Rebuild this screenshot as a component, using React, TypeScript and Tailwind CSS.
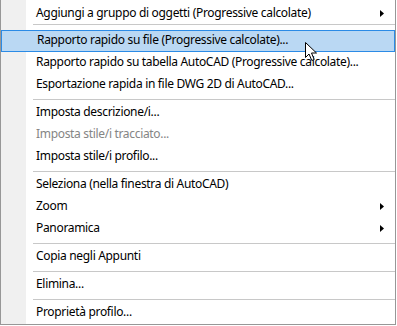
import React from "react";

type Entry =
  | { kind: "item"; label: string; disabled?: boolean; submenu?: boolean; active?: boolean; first?: boolean }
  | { kind: "sep" };

const entries: Entry[] = [
  { kind: "item", label: "Aggiungi a gruppo di oggetti (Progressive calcolate)", submenu: true, first: true },
  { kind: "sep" },
  { kind: "item", label: "Rapporto rapido su file (Progressive calcolate)...", active: true },
  { kind: "item", label: "Rapporto rapido su tabella AutoCAD (Progressive calcolate)..." },
  { kind: "item", label: "Esportazione rapida in file DWG 2D di AutoCAD..." },
  { kind: "sep" },
  { kind: "item", label: "Imposta descrizione/i..." },
  { kind: "item", label: "Imposta stile/i tracciato...", disabled: true },
  { kind: "item", label: "Imposta stile/i profilo..." },
  { kind: "sep" },
  { kind: "item", label: "Seleziona (nella finestra di AutoCAD)" },
  { kind: "item", label: "Zoom", submenu: true },
  { kind: "item", label: "Panoramica", submenu: true },
  { kind: "sep" },
  { kind: "item", label: "Copia negli Appunti" },
  { kind: "sep" },
  { kind: "item", label: "Elimina..." },
  { kind: "sep" },
  { kind: "item", label: "Proprietà profilo..." },
];

function SubArrow() {
  return (
    <svg width="4" height="7" viewBox="0 0 4 7" className="shrink-0">
      <polygon points="0,0 4,3.5 0,7" fill="#000" />
    </svg>
  );
}

function Cursor() {
  return (
    <svg
      width="14"
      height="21"
      viewBox="0 0 14 21"
      className="pointer-events-none absolute left-[304px] top-[41px]"
    >
      <path
        d="M1.5 1.5 V16.5 L5 13 L7.8 19.5 L10.2 18.5 L7.5 12 H12.5 Z"
        fill="#fff"
        stroke="#000"
        strokeWidth="1"
        strokeLinejoin="miter"
      />
    </svg>
  );
}

export default function App() {
  return (
    <div className="relative h-[326px] w-[397px] bg-white">
      <div
        className="h-[325px] w-[396px] border-x border-b border-[#979797] bg-[linear-gradient(to_right,#f0f0f0_25px,#ffffff_25px)] text-[12px] tracking-[-0.32px] text-black"
        style={{ fontFamily: '"Segoe UI", "Noto Sans", "Open Sans", sans-serif' }}
      >
        {entries.map((e, i) =>
          e.kind === "sep" ? (
            <div key={i} className="h-[6px] pl-[32px] pt-[3px]">
              <div className="h-px bg-[#c8c8c8]" />
            </div>
          ) : (
            <div
              key={i}
              className={`flex items-center pl-[35px] pr-[11px] ${
                e.first ? "h-[21px] pt-[5px]" : "h-[22px] pb-[2px]"
              } ${e.active ? "mt-[3px] border border-[#2b8be6] bg-[#bad8f3] pl-[34px] pr-[10px]" : ""} ${
                e.disabled ? "text-[#858585]" : ""
              }`}
            >
              <span className="flex-1 whitespace-nowrap leading-[16px]">{e.label}</span>
              {e.submenu ? <SubArrow /> : null}
            </div>
          )
        )}
      </div>
      <Cursor />
    </div>
  );
}
